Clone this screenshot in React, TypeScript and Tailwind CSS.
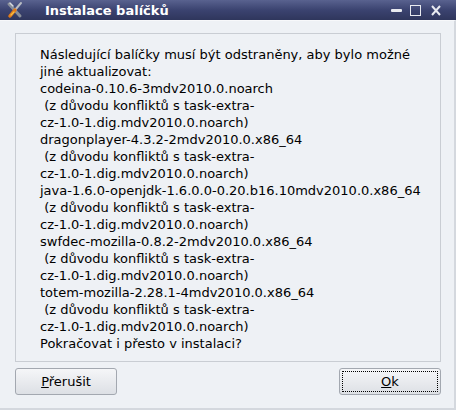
import React from 'react';

const lines = [
  'Následující balíčky musí být odstraněny, aby bylo možné',
  'jiné aktualizovat:',
  'codeina-0.10.6-3mdv2010.0.noarch',
  ' (z důvodu konfliktů s task-extra-',
  'cz-1.0-1.dig.mdv2010.0.noarch)',
  'dragonplayer-4.3.2-2mdv2010.0.x86_64',
  ' (z důvodu konfliktů s task-extra-',
  'cz-1.0-1.dig.mdv2010.0.noarch)',
  'java-1.6.0-openjdk-1.6.0.0-0.20.b16.10mdv2010.0.x86_64',
  ' (z důvodu konfliktů s task-extra-',
  'cz-1.0-1.dig.mdv2010.0.noarch)',
  'swfdec-mozilla-0.8.2-2mdv2010.0.x86_64',
  ' (z důvodu konfliktů s task-extra-',
  'cz-1.0-1.dig.mdv2010.0.noarch)',
  'totem-mozilla-2.28.1-4mdv2010.0.x86_64',
  ' (z důvodu konfliktů s task-extra-',
  'cz-1.0-1.dig.mdv2010.0.noarch)',
  'Pokračovat i přesto v instalaci?',
];

function AppIcon() {
  return (
    <svg width="18" height="18" viewBox="0 0 18 18">
      <path d="M3 3 L14 15" stroke="#8a8f99" strokeWidth="3" strokeLinecap="round" />
      <path d="M4 2 L7 5" stroke="#d8dbe0" strokeWidth="1.5" strokeLinecap="round" />
      <path d="M15 2 L9 9" stroke="#b8bcc4" strokeWidth="2" strokeLinecap="round" />
      <path d="M9 9 L4 15" stroke="#e07a1a" strokeWidth="3.5" strokeLinecap="round" />
      <path d="M8 11 L5 14" stroke="#f5c040" strokeWidth="1.2" strokeLinecap="round" />
    </svg>
  );
}

function Button({ label, focused }: { label: string; focused?: boolean }) {
  return (
    <button className="relative w-[102px] h-[27px] rounded-[3px] border border-[#a3a8b0] bg-gradient-to-b from-[#f5f6f8] to-[#dde0e5] text-[13px] text-black">
      {focused && (
        <span className="absolute inset-[2px] border border-dotted border-black rounded-[1px]" />
      )}
      <span className="underline">{label[0]}</span>
      <span>{label.slice(1)}</span>
    </button>
  );
}

export default function App() {
  return (
    <div
      className="w-[456px] h-[410px] flex flex-col overflow-hidden"
      style={{ fontFamily: '"DejaVu Sans", Verdana, sans-serif' }}
    >
      {/* Title bar */}
      <div className="h-[20px] flex items-center bg-gradient-to-b from-[#59628f] via-[#3b4370] to-[#2f365c] pl-[6px] pr-[15px]">
        <AppIcon />
        <span className="ml-[21px] text-[13px] font-bold text-white leading-none">Instalace balíčků</span>
        <div className="ml-auto flex items-center">
          <span className="w-[11px] h-[3px] bg-[#e8eaf0] rounded-[1px]" />
          <span className="ml-[8px] w-[11px] h-[11px] border-[1.5px] border-[#e8eaf0]" />
          <svg className="ml-[10px]" width="10" height="11" viewBox="0 0 10 11">
            <path d="M1 1 L9 10 M9 1 L1 10" stroke="#e8eaf0" strokeWidth="2" />
          </svg>
        </div>
      </div>

      {/* Body */}
      <div className="flex-1 flex flex-col bg-[#eef1f5] border-t border-[#f7f8fa] border-r-2 border-r-[#d4d8de] border-b-2 border-b-[#d4d8de] pl-[15px] pr-[13px] pt-[12px]">
        <div className="h-[329px] border border-[#c9cdd3] pl-[24px] pt-[12px] text-[13px] leading-[17px] text-black whitespace-pre">
          {lines.map((l, i) => (
            <div key={i}>{l}</div>
          ))}
        </div>
        <div className="flex justify-between mt-[6px]">
          <Button label="Přerušit" />
          <Button label="Ok" focused />
        </div>
      </div>
    </div>
  );
}
